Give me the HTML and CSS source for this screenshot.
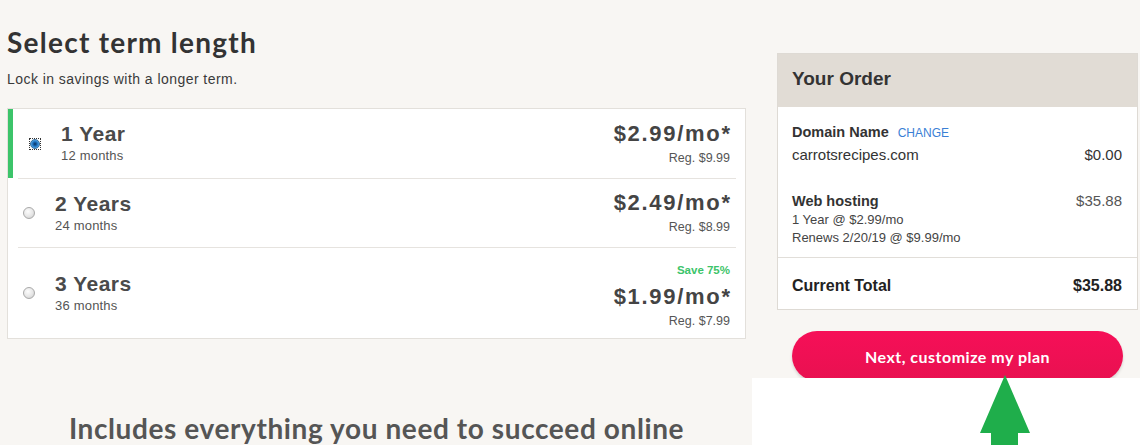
FILE: index.html
```html
<!DOCTYPE html>
<html lang="en">
<head>
<meta charset="utf-8">
<title>Select term length</title>
<link rel="stylesheet" href="styles.css">
</head>
<body>
<div class="page">
  <main class="terms">
    <h1 class="title">Select term length</h1>
    <p class="subtitle">Lock in savings with a longer term.</p>
    <div class="card">
      <div class="term selected">
        <span class="radio-focus"><span class="radio checked"></span></span>
        <div class="term-info">
          <div class="term-name">1 Year</div>
          <div class="term-months">12 months</div>
        </div>
        <div class="term-price">
          <div class="price">$2.99/mo*</div>
          <div class="reg">Reg. $9.99</div>
        </div>
      </div>
      <div class="term">
        <span class="radio"></span>
        <div class="term-info">
          <div class="term-name">2 Years</div>
          <div class="term-months">24 months</div>
        </div>
        <div class="term-price">
          <div class="price">$2.49/mo*</div>
          <div class="reg">Reg. $8.99</div>
        </div>
      </div>
      <div class="term last">
        <span class="radio"></span>
        <div class="term-info">
          <div class="term-name">3 Years</div>
          <div class="term-months">36 months</div>
        </div>
        <div class="term-price">
          <div class="save">Save 75%</div>
          <div class="price">$1.99/mo*</div>
          <div class="reg">Reg. $7.99</div>
        </div>
      </div>
    </div>
    <h2 class="includes">Includes everything you need to succeed online</h2>
  </main>
  <aside class="order-col">
    <div class="order">
      <div class="order-head">Your Order</div>
      <div class="order-body">
        <div class="line"><span class="label">Domain Name</span><a class="change" href="#">CHANGE</a></div>
        <div class="line domain"><span>carrotsrecipes.com</span><span>$0.00</span></div>
        <div class="line hosting"><span class="label">Web hosting</span><span class="amount">$35.88</span></div>
        <div class="small">1 Year @ $2.99/mo</div>
        <div class="small">Renews 2/20/19 @ $9.99/mo</div>
      </div>
      <div class="order-total">
        <span>Current Total</span><span>$35.88</span>
      </div>
    </div>
    <button class="next">Next, customize my plan</button>
  </aside>
</div>
<div class="annotation">
  <svg class="arrow" width="52" height="70" viewBox="0 0 52 70">
    <polygon points="26,0 51,58 39,58 39,70 12,70 12,58 1,58" fill="#1fae4b"/>
  </svg>
</div>
</body>
</html>
```
FILE: styles.css
```css
html, body {
  margin: 0;
  padding: 0;
  background: #f8f6f3;
  height: 445px;
  overflow: hidden;
}
body {
  font-family: "Liberation Sans", Arial, sans-serif;
  color: #333;
}
.page {
  display: grid;
  grid-template-columns: 739px 362px;
  column-gap: 31px;
  padding-left: 7px;
}
.terms {
  padding-top: 26px;
}
.title {
  margin: 0;
  font-family: Lato, sans-serif;
  font-weight: 700;
  font-size: 28px;
  line-height: 32px;
  letter-spacing: 1.25px;
  color: #333;
}
.subtitle {
  margin: 12px 0 0;
  font-size: 14px;
  line-height: 18px;
  letter-spacing: 0.45px;
  color: #3a3a3a;
}
.card {
  margin-top: 20px;
  background: #fff;
  border: 1px solid #e3e0db;
}
.term {
  position: relative;
  display: flex;
  align-items: center;
  height: 68px;
  margin: 0 9px 0 10px;
  padding: 0 6px 0 5px;
  border-bottom: 1px solid #e6e3df;
}
.term.selected {
  height: 69px;
  padding-left: 11px;
}
.term.selected::before {
  content: "";
  position: absolute;
  left: -10px;
  top: 0;
  bottom: 0;
  width: 5px;
  background: #3cc46a;
}
.term.last {
  height: 90px;
  border-bottom: 0;
}
.radio {
  width: 10px;
  height: 10px;
  border-radius: 50%;
  border: 1px solid #a9a9a9;
  background: radial-gradient(circle at 40% 35%, #fdfdfd 0%, #e6e6e6 55%, #c9c9c9 100%);
  flex: none;
}
.radio-focus {
  display: flex;
  align-items: center;
  justify-content: center;
  width: 10px;
  height: 10px;
  border: 1px dotted #333;
  flex: none;
}
.radio.checked {
  width: 8px;
  height: 8px;
  border-color: #3a6d99;
  background: radial-gradient(circle at 50% 50%, #0d2f56 0%, #1767b4 35%, #4ea4e6 70%, #a7d0ef 100%);
}
.term-info {
  margin-left: 20px;
  flex: 1;
}
.term-name {
  font-weight: 700;
  font-size: 21px;
  line-height: 24px;
  letter-spacing: 0.5px;
  color: #4a4a4a;
}
.term-months {
  margin-top: 1px;
  font-size: 13px;
  line-height: 18px;
  letter-spacing: 0.2px;
  color: #555;
}
.term-price {
  text-align: right;
}
.term.last .term-price {
  padding-top: 5px;
}
.price {
  font-weight: 700;
  font-size: 22px;
  line-height: 24px;
  letter-spacing: 1.7px;
  margin-right: -1.7px;
  color: #444;
}
.reg {
  margin-top: 4px;
  font-size: 12.5px;
  line-height: 16px;
  color: #555;
}
.save {
  font-weight: 700;
  font-size: 11.5px;
  line-height: 14px;
  margin-bottom: 8px;
  color: #3cc46a;
}
.includes {
  margin: 73px 0 0;
  text-align: center;
  font-family: Lato, sans-serif;
  font-weight: 700;
  font-size: 28px;
  line-height: 32px;
  letter-spacing: 0.6px;
  color: #555;
}
.order-col {
  padding-top: 53px;
  padding-right: 1px;
}
.order {
  background: #fff;
  border: 1px solid #dedad4;
}
.order-head {
  height: 49px;
  padding: 0 0 4px 14px;
  display: flex;
  align-items: center;
  background: #e1dcd5;
  font-weight: 700;
  font-size: 19px;
  color: #333;
}
.order-body {
  padding: 15px 15px 10px 14px;
  border-bottom: 1px solid #e1ded9;
}
.line {
  display: flex;
  justify-content: space-between;
  align-items: baseline;
  line-height: 20px;
}
.label {
  font-weight: 700;
  font-size: 14.5px;
  color: #333;
}
.change {
  margin-left: 9px;
  margin-right: auto;
  font-size: 12px;
  color: #3a7fd5;
  text-decoration: none;
}
.domain {
  margin-top: 2px;
  font-size: 15px;
  color: #333;
}
.hosting {
  margin-top: 26px;
}
.amount {
  font-size: 15px;
  color: #555;
}
.small {
  font-size: 13px;
  line-height: 18px;
  color: #444;
}
.order-total {
  display: flex;
  justify-content: space-between;
  padding: 18px 15px 13px 14px;
  font-weight: 700;
  font-size: 16px;
  line-height: 20px;
  color: #222;
}
.next {
  display: block;
  width: 331px;
  height: 50px;
  margin: 21px 0 0 15px;
  border: 0;
  border-radius: 25px;
  background: linear-gradient(180deg, #f60f58 0%, #e81150 100%);
  box-shadow: 0 2px 3px rgba(0,0,0,0.15);
  color: #fff;
  font-family: Lato, sans-serif;
  font-weight: 700;
  font-size: 16px;
  letter-spacing: 0.5px;
  cursor: pointer;
}
.annotation {
  position: absolute;
  left: 752px;
  top: 378px;
  width: 388px;
  height: 67px;
  background: #fff;
}
.arrow {
  position: absolute;
  left: 227px;
  top: -3px;
}
```
